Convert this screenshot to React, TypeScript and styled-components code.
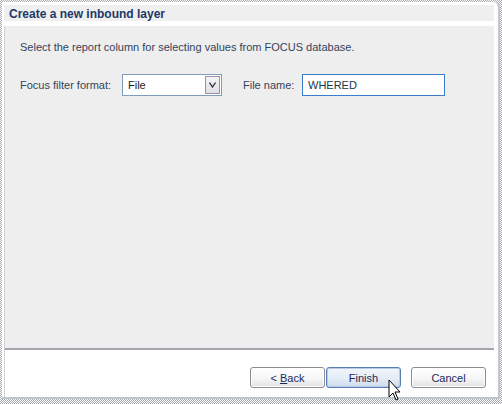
import React from "react";
import styled, { createGlobalStyle } from "styled-components";

const Global = createGlobalStyle`
  html, body { margin: 0; padding: 0; background: #ffffff; }
  body { font-family: Tahoma, "DejaVu Sans", "Liberation Sans", sans-serif; }
`;

const Frame = styled.div`
  width: 502px;
  height: 404px;
  box-sizing: border-box;
  padding: 2px 2px 5px 2px;
  background: repeating-conic-gradient(#a8a8b0 0 25%, #ffffff 0 50%) 0 0 / 2px 2px;
  position: relative;
`;

const Window = styled.div`
  height: 100%;
  box-sizing: border-box;
  background: #ffffff;
  border-right: 2px solid #c4c4cc;
  border-bottom: 2px solid #b8c8c8;
  border-top-right-radius: 6px;
  display: flex;
  flex-direction: column;
  padding: 3px 2px 0 2px;
`;

const TitleBar = styled.div`
  height: 16px;
  background: #efefef;
  display: flex;
  align-items: center;
  padding-left: 5px;
  padding-top: 2px;
  box-sizing: border-box;
  font-family: "Liberation Sans", Arial, sans-serif;
  font-weight: bold;
  font-size: 12px;
  color: #1d3868;
  margin-right: 2px;
`;

const Body = styled.div`
  flex: 1;
  display: flex;
  flex-direction: column;
  margin-top: 5px;
  border-left: 1px solid #d0d0d4;
  margin-right: 2px;
`;

const Panel = styled.div`
  flex: 1;
  background: #eeeeee;
  border-bottom: 2px solid #a4a4ac;
  padding: 14px 0 0 15px;
  font-family: "Liberation Sans", Arial, sans-serif;
  font-size: 11px;
  color: #34445a;
`;

const Intro = styled.div`
  height: 14px;
  line-height: 14px;
`;

const Row = styled.div`
  display: flex;
  align-items: center;
  margin-top: 20px;
  height: 22px;
`;

const Label = styled.span<{ w: number }>`
  width: ${(p) => p.w}px;
`;

const Combo = styled.div`
  width: 100px;
  height: 22px;
  box-sizing: border-box;
  border: 1px solid #7f9db9;
  background: #fff;
  display: flex;
  align-items: center;
  margin-right: 21px;
`;

const ComboText = styled.span`
  flex: 1;
  padding-left: 5px;
  color: #1a1a1a;
`;

const DropBtn = styled.div`
  width: 15px;
  height: 18px;
  margin-right: 1px;
  box-sizing: border-box;
  border: 1px solid #9890b0;
  background: linear-gradient(#f4f4f4, #e0e0e4);
  display: flex;
  align-items: center;
  justify-content: center;
`;

const TextInput = styled.div`
  width: 143px;
  height: 22px;
  box-sizing: border-box;
  border: 1px solid #3a7ccc;
  background: #fff;
  display: flex;
  align-items: center;
  padding-left: 5px;
  color: #1a3a4a;
`;

const Footer = styled.div`
  height: 47px;
  background: #fff;
  display: flex;
  justify-content: flex-end;
  align-items: flex-start;
  padding-top: 17px;
  padding-right: 8px;
  box-sizing: border-box;
`;

const Button = styled.div<{ primary?: boolean; gap?: number }>`
  width: 75px;
  height: 21px;
  box-sizing: border-box;
  border: 1px solid ${(p) => (p.primary ? "#5a7eb4" : "#8c8c94")};
  border-radius: 3px;
  background: ${(p) =>
    p.primary
      ? "linear-gradient(#f2f6fb 0%, #e4ecf6 55%, #cfdcee 100%)"
      : "linear-gradient(#ffffff 0%, #f6f6f6 55%, #e2e2e4 100%)"};
  box-shadow: inset 0 0 0 1px ${(p) => (p.primary ? "#b8cce8" : "#ffffff")};
  margin-left: ${(p) => p.gap ?? 0}px;
  display: flex;
  align-items: center;
  justify-content: center;
  font-family: "Liberation Sans", Arial, sans-serif;
  font-size: 11px;
  color: #1d2a5a;
`;

const Cursor = styled.svg`
  position: absolute;
  left: 388px;
  top: 379px;
`;

export default function App() {
  return (
    <>
      <Global />
      <Frame>
        <Window>
          <TitleBar>Create a new inbound layer</TitleBar>
          <Body>
            <Panel>
              <Intro>Select the report column for selecting values from FOCUS database.</Intro>
              <Row>
                <Label w={102}>Focus filter format:</Label>
                <Combo>
                  <ComboText>File</ComboText>
                  <DropBtn>
                    <svg width="7" height="6" viewBox="0 0 7 6">
                      <path d="M0.5 0.5 L3.5 5 L6.5 0.5" fill="none" stroke="#303040" strokeWidth="1.3" />
                    </svg>
                  </DropBtn>
                </Combo>
                <Label w={59}>File name:</Label>
                <TextInput>WHERED</TextInput>
              </Row>
            </Panel>
            <Footer>
              <Button>
                &lt;&nbsp;<u>B</u>ack
              </Button>
              <Button primary gap={1}>Finish</Button>
              <Button gap={10}>Cancel</Button>
            </Footer>
          </Body>
        </Window>
        <Cursor width="14" height="24" viewBox="0 0 14 24">
          <path d="M1 1 L1 18 L5 14 L8 21 L10 20 L7 13 L12 13 Z" fill="#fff" stroke="#000" strokeWidth="1" />
        </Cursor>
      </Frame>
    </>
  );
}
